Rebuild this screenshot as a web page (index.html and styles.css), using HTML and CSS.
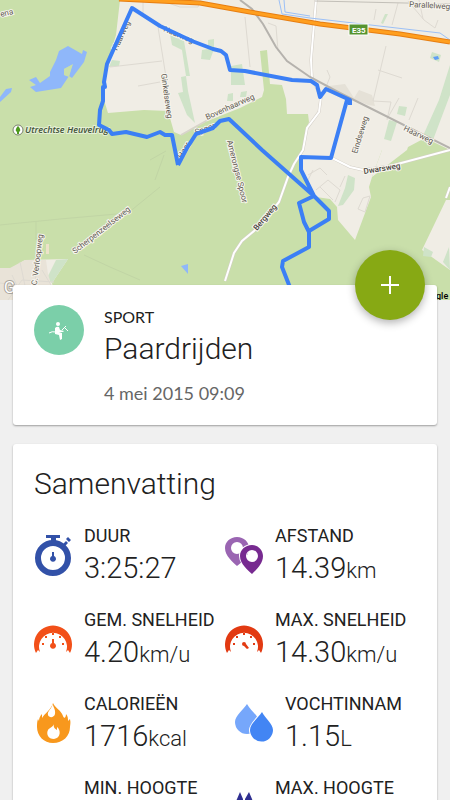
FILE: index.html
```html
<!DOCTYPE html>
<html lang="nl">
<head>
	<meta charset="utf-8">
	<meta name="viewport" content="width=device-width, initial-scale=1">
	<title>Paardrijden</title>
	<link rel="stylesheet" href="styles.css">
</head>
<body>
	<div class="screen">
		<svg class="map" viewBox="0 0 450 300" preserveAspectRatio="xMidYMin slice">
			<rect width="450" height="300" fill="#f0ede5"/>
			<!-- woods -->
			<g fill="#c9dfaa">
				<path d="M0 0H120L116 35L107 64L104 100L108 113L144 110L168 111L174 132L181 135L205 122L240 108L262 97L264 90L260 51L267 50L270 84L282 85L286 99L287 114L308 114L309 122L305 134L300 160L302 176L316 197L330 199L337 207L338 220L355 240L371 197L369 187L372 177L382 150H407L408 147L425 138L450 150V200L446 200L422 250L450 270V300H56L52 283L68 259L25 260L10 269L0 268Z"/>
			</g>
			<path d="M382 150H407L372 177Z" fill="#f0ede5"/>
			<g fill="#cfe3c8">
				<path d="M170 34L184 41L190 76H186L188 91L195 123L187 115L178 93L183 92L181 77L186 76L182 50L172 45Z"/>
				<path d="M112 60L120 61L119 66L109 67ZM208 40L214 39L214 49L210 60L201 59L202 50L208 49ZM231 66L242 64L245 85H231ZM228 94L233 93L233 101L227 101ZM241 92L247 91L246 97H240Z"/>
				<path d="M450 65V95L433 140L422 138L439 100ZM399 106L407 107L405 116L397 114ZM389 120L397 122L391 141L384 139ZM348 175L355 178L354 190L343 205L338 206L345 188ZM385 14L388 14L383 24L381 23ZM432 52L441 55L439 62L430 58ZM424 247L433 252L431 257L423 256ZM449 247L443 262L450 270Z"/>
				<path d="M56 260L68 259L52 283L46 280ZM8 271L18 265L15 278L6 280Z"/>
			</g>
			<path d="M329 86L345 84L354 98L359 90L372 95L375 106L368 105L329 89Z" fill="#e5e1d7"/>
			<path d="M0 268H10L25 260H46L48 274L56 300H0Z" fill="#e9e3d8"/>
			<path d="M46 244H49V254H46Z" fill="#ece2c9"/>
			<!-- water -->
			<g fill="#8fb7fa">
				<path d="M50 72L56 60L59 51L68 46L82 54L83 50L87 52L84 62L72 78L69 76L72 65L64 69L64 75L69 76L61 88L36 92L30 87L36 85L29 80L36 77L40 83L50 76Z"/>
				<path d="M0 97L6 89L12 88L11 92L0 102ZM181 266L188 264V274Z"/>
			</g>
			<path d="M64 69L73 64L71 70L69 77L64 75Z" fill="#c9dfaa"/>
			<path d="M433 57L438 56L439 59L435 60Z" fill="#5e9df5"/>
			<!-- small roads -->
			<g fill="none" stroke="#dedad2">
				<path d="M110 67L162 61M138 86L160 82M158 27L166 77M165 2L180 7H198L201 0M143 0V13M245 17L250 67M268 23L276 26L278 51M386 46L373 101M378 70L402 78M327 70L330 77L326 87M408 1L424 20L435 28L438 20M419 0L423 19M398 3L392 25M376 9L374 20M373 101L391 102L387 120M399 98L387 119M418 98L409 120"/>
				<path d="M308 175L320 168L327 175M306 184L313 170M316 190L328 180L340 190L335 202M320 187L333 200M345 176L340 187M358 209L363 198L370 196L365 212Z"/>
				<path d="M12 275L24 300M20 262L28 300M0 283L30 287M38 262L32 300M42 270L60 300M8 300L22 280L54 282"/>
			</g>
			<path d="M0 225L60 219L128 213L160 187M84 255L110 267L140 280M36 222V240M150 160L166 151M155 180L164 155" fill="none" stroke="#c1d5a5"/>
			<path d="M181 135L222 112L250 96" fill="none" stroke="#d8d4ca" stroke-width="2"/>
			<g fill="none" stroke="#d3cec6" stroke-width="3">
				<path d="M225 281L234 253L242 241L254 231L270 213L279 202L288 177L294 164L303 150L307 128L319 112L321 97L312 78L311 60L316 0M332 158L350 167L363 170L390 166L450 150M450 187L446 198"/>
			</g>
			<g fill="none" stroke="#fff" stroke-width="2">
				<path d="M225 281L234 253L242 241L254 231L270 213L279 202L288 177L294 164L303 150L307 128L319 112L321 97L312 78L311 60L316 0M332 158L350 167L363 170L390 166L450 150M450 187L446 198"/>
			</g>
			<path d="M240 0L252 9L263 24L276 47L287 61L310 77L340 93L450 148" fill="none" stroke="#b5b2ad" stroke-width="2"/>
			<path d="M315 1L450 4" fill="none" stroke="#c2bfb8"/>
			<path d="M279 0L282 14L310 18L440 33L450 40M284 0L285 12L310 16" fill="none" stroke="#9cc0f6"/>
			<path d="M119 -1L200 3L250 12L320 24L400 34L450 42" fill="none" stroke="#e77e12" stroke-width="5"/>
			<path d="M119 -1L200 3L250 12L320 24L400 34L450 42" fill="none" stroke="#ff9f1f" stroke-width="3"/>
			<!-- labels -->
			<g class="road">
				<text x="1" y="17" transform="rotate(-14 1 17)">ena</text>
				<text x="163" y="31" transform="rotate(23 163 31)">Haarweg</text>
				<text x="117" y="51" transform="rotate(-65 117 51)">Haarweg</text>
				<text x="161" y="74" transform="rotate(82 161 74)">Ginkelseweg</text>
				<text x="207" y="120" transform="rotate(-24 207 120)">Bovenhaarweg</text>
				<text x="182" y="159" transform="rotate(-60 182 159)">Haar</text>
				<text x="196" y="135" transform="rotate(-20 196 135)">Spoor</text>
				<text x="227" y="141" transform="rotate(76 227 141)">Amerongse Spoor</text>
				<text x="75" y="254" transform="rotate(-38 75 254)">Scherpenzeelseweg</text>
				<text x="36" y="292" transform="rotate(-83 36 292)">J.C. Verloopweg</text>
				<text x="357" y="154" transform="rotate(-73 357 154)">Eindseweg</text>
				<text x="403" y="130" transform="rotate(26 403 130)">Haarweg</text>
				<text x="409" y="7" transform="rotate(3 409 7)">Parallelweg</text>
			</g>
			<g class="road road-main">
				<text x="257" y="231" transform="rotate(-50 257 231)">Bergweg</text>
				<text x="364" y="174" transform="rotate(-9 364 174)">Dwarsweg</text>
			</g>
			<circle cx="18" cy="130" r="5" fill="#fff" stroke="#7a806f"/>
			<path d="M18 126C21 129 21 132 18 132C15 132 15 129 18 126ZM17 131H19V134H17Z" fill="#4e9b1d"/>
			<text class="park" x="25" y="133">Utrechtse Heuvelrug</text>
			<rect x="349" y="24" width="19" height="11" fill="#56942f" stroke="#fff"/>
			<text class="shield" x="352" y="33">E35</text>
			<!-- ridden route -->
			<path class="route" d="M178 165L172 135L165 135L160 132L147 137L126 132L112 134L109 130L99 125L100 110L103 101V87H105L104 82L107 64L132 8L160 26L192 41L213 49L221 51L226 55L230 70L245 71L292 80L311 81L317 85L320 97L326 89L350 100V105M347 100L331 158L301 157L301 170L314 196L299 203L304 222L309 232V247L283 261L282 267L291 290M178 165L187 148L196 134L213 128L220 121L229 119L262 150L314 196L329 211V219L309 231"/>
			<text class="logo-mark" x="4" y="293">G</text>
			<text class="logo" x="436" y="299">gle</text>
		</svg>

		<main class="content">
			<section class="card activity">
				<svg class="avatar" viewBox="0 0 50 50">
					<circle cx="25" cy="25" r="25" fill="#7bcfa9"/>
					<circle cx="24" cy="19" r="2" fill="#fff"/>
					<path d="M21 23Q23 21 25 22L26 25L30 26L29 27L25 27L28 28V34L26 35L25 30L21 29Z" fill="#fff"/>
					<path d="M15 28Q18 26 22 27M28 25L32 21M30 22L34 26" fill="none" stroke="#fff"/>
				</svg>
				<div>
					<p class="kind">SPORT</p>
					<h1 class="title">Paardrijden</h1>
					<p class="date">4 mei 2015 09:09</p>
				</div>
				<button class="add" type="button" aria-label="Toevoegen">
					<svg viewBox="0 0 18 18" width="18" height="18"><path d="M9 0V18M0 9H18" stroke="#fff" stroke-width="2"/></svg>
				</button>
			</section>

			<section class="card summary">
				<h2 class="title">Samenvatting</h2>
				<dl class="stats">
					<div class="stat">
						<svg class="icon" viewBox="0 0 38 42">
							<circle cx="19" cy="24" r="15" fill="none" stroke="#3251a8" stroke-width="6"/>
							<path d="M12 1H26V4H22V7H17V4H12ZM29 10L32 7L34 9L31 12ZM32 5L34 3L37 6L35 8ZM18 18H20V22A3 3 0 1 1 18 22Z" fill="#3251a8"/>
						</svg>
						<dt>DUUR</dt>
						<dd>3:25:27</dd>
					</div>
					<div class="stat">
						<svg class="icon" viewBox="0 0 38 42">
							<path d="M12 3C5 3 0 8 0 14C0 22 8 28 12 32C17 28 24 22 24 14C24 8 19 3 12 3ZM12 8A6 6 0 1 1 12 20A6 6 0 1 1 12 8Z" fill="#9a65b2" fill-rule="evenodd"/>
							<path d="M27 11C20 11 15 16 15 22C15 30 23 36 27 40C31 36 38 30 38 22C38 16 33 11 27 11ZM27 16A6 6 0 1 1 27 28A6 6 0 1 1 27 16Z" fill="#772a90" stroke="#fff" stroke-width="2" paint-order="stroke" fill-rule="evenodd"/>
						</svg>
						<dt>AFSTAND</dt>
						<dd>14.39<small>km</small></dd>
					</div>
					<div class="stat">
						<svg class="icon" viewBox="0 0 38 42">
							<path d="M2 35A19 19 0 1 1 36 35L34 32L32 34A14 14 0 1 0 6 34L4 32Z" fill="#f25019"/>
							<path d="M18 21H20V25A3 3 0 1 1 18 25ZM8 25H10V27H8ZM11 18H13V20H11ZM18 15H20V17H18ZM25 18H27V20H25ZM28 25H30V27H28Z" fill="#f25019"/>
						</svg>
						<dt>GEM. SNELHEID</dt>
						<dd>4.20<small>km/u</small></dd>
					</div>
					<div class="stat">
						<svg class="icon" viewBox="0 0 38 42">
							<path d="M2 35A19 19 0 1 1 36 35L34 32L32 34A14 14 0 1 0 6 34L4 32Z" fill="#e23a12"/>
							<path d="M17 26A2 2 0 0 1 21 26L24 30L22 31L19 28A2 2 0 0 1 17 26ZM8 25H10V27H8ZM11 18H13V20H11ZM18 15H20V17H18ZM25 18H27V20H25ZM28 25H30V27H28Z" fill="#e23a12"/>
						</svg>
						<dt>MAX. SNELHEID</dt>
						<dd>14.30<small>km/u</small></dd>
					</div>
					<div class="stat">
						<svg class="icon" viewBox="0 0 38 42">
							<path d="M19 1C21 6 27 8 29 14C30 17 32 16 32 12C34 14 34 17 34 19L36 17C37 21 36 23 36 25C36 34 29 41 19 41C10 41 3 34 3 25C3 22 3 20 4 17L5 19C5 16 6 14 8 12V16C11 11 17 8 19 1Z" fill="#f8981d"/>
							<path d="M19 1C18 4 22 7 21 12C20 16 15 16 14 13C13 9 18 7 19 1ZM20 22C19 25 21 27 23 28V25C27 28 27 36 20 37C14 37 12 32 14 28C15 26 19 25 20 22Z" fill="#fff"/>
						</svg>
						<dt>CALORIEËN</dt>
						<dd>1716<small>kcal</small></dd>
					</div>
					<div class="stat stat-inset">
						<svg class="icon" viewBox="0 0 38 42">
							<path d="M12 2C8 8 0 14 0 20A12 12 0 0 0 24 20C24 14 15 8 12 2Z" fill="#76a7fb"/>
							<path d="M27 10C23 16 15 22 15 28A11 11 0 0 0 38 28C38 22 30 16 27 10Z" fill="#4285f4" stroke="#fff" stroke-width="2" paint-order="stroke"/>
						</svg>
						<dt>VOCHTINNAM</dt>
						<dd>1.15<small>L</small></dd>
					</div>
					<div class="stat">
						<dt>MIN. HOOGTE</dt>
					</div>
					<div class="stat">
						<svg class="icon" viewBox="0 0 38 42">
							<path d="M15 6L18 13V42H8V22L12 13ZM24 6L27 13L30 22V42H20V13Z" fill="#2f2f91"/>
						</svg>
						<dt>MAX. HOOGTE</dt>
					</div>
				</dl>
			</section>
		</main>
	</div>
</body>
</html>
```

FILE: styles.css
```css
*{
	box-sizing: border-box;
}
body{
	margin: 0;
	background: #f0f0f0;
	color: #212121;
	font-family: Roboto, "Liberation Sans", sans-serif;
}
p, h1, h2, dl, dt, dd{
	margin: 0;
}
.screen{
	height: 100vh;
	overflow-y: auto;
	scrollbar-width: none;
}
.map{
	display: block;
	width: 100%;
	height: 300px;
}
.road{
	font-size: 8px;
	fill: #5f5a52;
	stroke: #f7f5ee;
	stroke-width: 2px;
	paint-order: stroke;
}
.road-main{
	font-size: 8px;
	font-weight: 500;
	fill: #4a463f;
}
.park{
	font-family: "Open Sans", sans-serif;
	font-size: 9px;
	font-style: italic;
	font-weight: 600;
	fill: #3f5237;
	stroke: #e4efd5;
	stroke-width: 2px;
	paint-order: stroke;
}
.shield{
	font-size: 8px;
	font-weight: 700;
	fill: #fff;
}
.route{
	fill: none;
	stroke: #3b7ff5;
	stroke-width: 4px;
	stroke-linejoin: round;
}
.logo{
	font-size: 9px;
	font-weight: 500;
}
.logo-mark{
	font-size: 16px;
	fill: #fff;
	stroke: #aaa59c;
	stroke-width: 2px;
	paint-order: stroke;
}
.content{
	position: relative;
	display: grid;
	gap: 19px;
	margin-top: -15px;
	padding: 0 13px 19px;
}
.card{
	position: relative;
	padding: 20px 21px;
	border-radius: 3px;
	background: #fff;
	box-shadow: 0 1px 2px rgba(0, 0, 0, 0.35);
}
.activity{
	display: flex;
	gap: 20px;
}
.avatar{
	flex: none;
	width: 50px;
	height: 50px;
}
.kind, .date{
	font-family: Lato, sans-serif;
	font-size: 18px;
	line-height: 24px;
}
.kind{
	font-size: 16px;
}
.date{
	margin-top: 12px;
	color: #666;
}
.title{
	font-size: 30px;
	font-weight: 300;
	line-height: 40px;
}
.add{
	position: absolute;
	top: -35px;
	right: 12px;
	display: grid;
	place-items: center;
	width: 70px;
	height: 70px;
	padding: 0;
	border: 0;
	border-radius: 50%;
	background: #87a914;
	box-shadow: 0 3px 8px rgba(0, 0, 0, 0.3);
}
.stats{
	display: grid;
	grid-template-columns: 1fr 1fr;
	grid-auto-rows: 84px;
	margin-top: 20px;
}
.stat{
	display: grid;
	grid-template-columns: 38px auto;
	grid-template-rows: 24px 40px;
	column-gap: 12px;
	white-space: nowrap;
}
.stat-inset{
	margin-left: 10px;
}
.icon{
	grid-row: 1 / 3;
	width: 38px;
	height: 42px;
	margin-top: 10px;
}
dt{
	grid-column: 2;
	font-size: 18px;
	line-height: 24px;
}
dd{
	grid-column: 2;
	font-size: 29px;
	font-weight: 300;
	line-height: 40px;
}
dd small{
	font-size: 22px;
}
```
